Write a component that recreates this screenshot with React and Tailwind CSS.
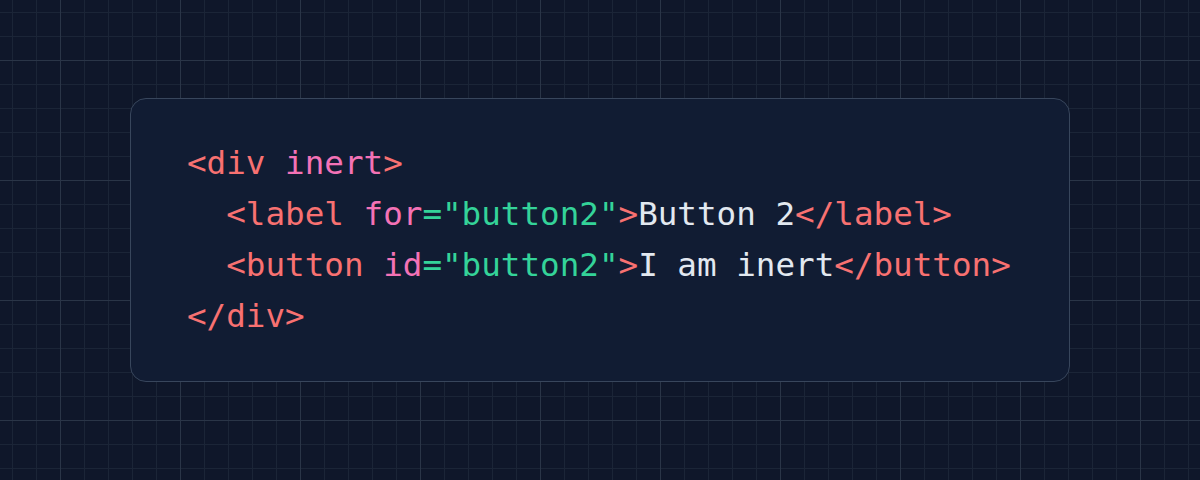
const tag = "text-[#f87171]";
const attr = "text-[#f472b6]";
const str = "text-[#34d399]";
const txt = "text-[#e2e8f0]";

export default function App() {
  return (
    <div className="w-[1200px] h-[480px] bg-[#0f172a] bg-[linear-gradient(to_right,#2a3547_1px,transparent_1px),linear-gradient(to_bottom,#2a3547_1px,transparent_1px),linear-gradient(to_right,#1b2537_1px,transparent_1px),linear-gradient(to_bottom,#1b2537_1px,transparent_1px)] [background-size:120px_120px,120px_120px,24px_24px,24px_24px] [background-position:60px_60px,60px_60px,12px_12px,12px_12px] flex items-start justify-center pt-[98px]">
      <div className="w-[940px] h-[284px] rounded-2xl border border-[#38465c] bg-[#111c33] pl-[56px] pt-[39px] font-['DejaVu_Sans_Mono','Liberation_Mono',monospace] text-[32.6px] leading-[51px] whitespace-pre">
        <div>
          <span className={tag}>&lt;div </span>
          <span className={attr}>inert</span>
          <span className={tag}>&gt;</span>
        </div>
        <div>
          <span className={tag}>{"  <label "}</span>
          <span className={attr}>for</span>
          <span className={str}>="button2"</span>
          <span className={tag}>&gt;</span>
          <span className={txt}>Button 2</span>
          <span className={tag}>&lt;/label&gt;</span>
        </div>
        <div>
          <span className={tag}>{"  <button "}</span>
          <span className={attr}>id</span>
          <span className={str}>="button2"</span>
          <span className={tag}>&gt;</span>
          <span className={txt}>I am inert</span>
          <span className={tag}>&lt;/button&gt;</span>
        </div>
        <div>
          <span className={tag}>&lt;/div&gt;</span>
        </div>
      </div>
    </div>
  );
}
